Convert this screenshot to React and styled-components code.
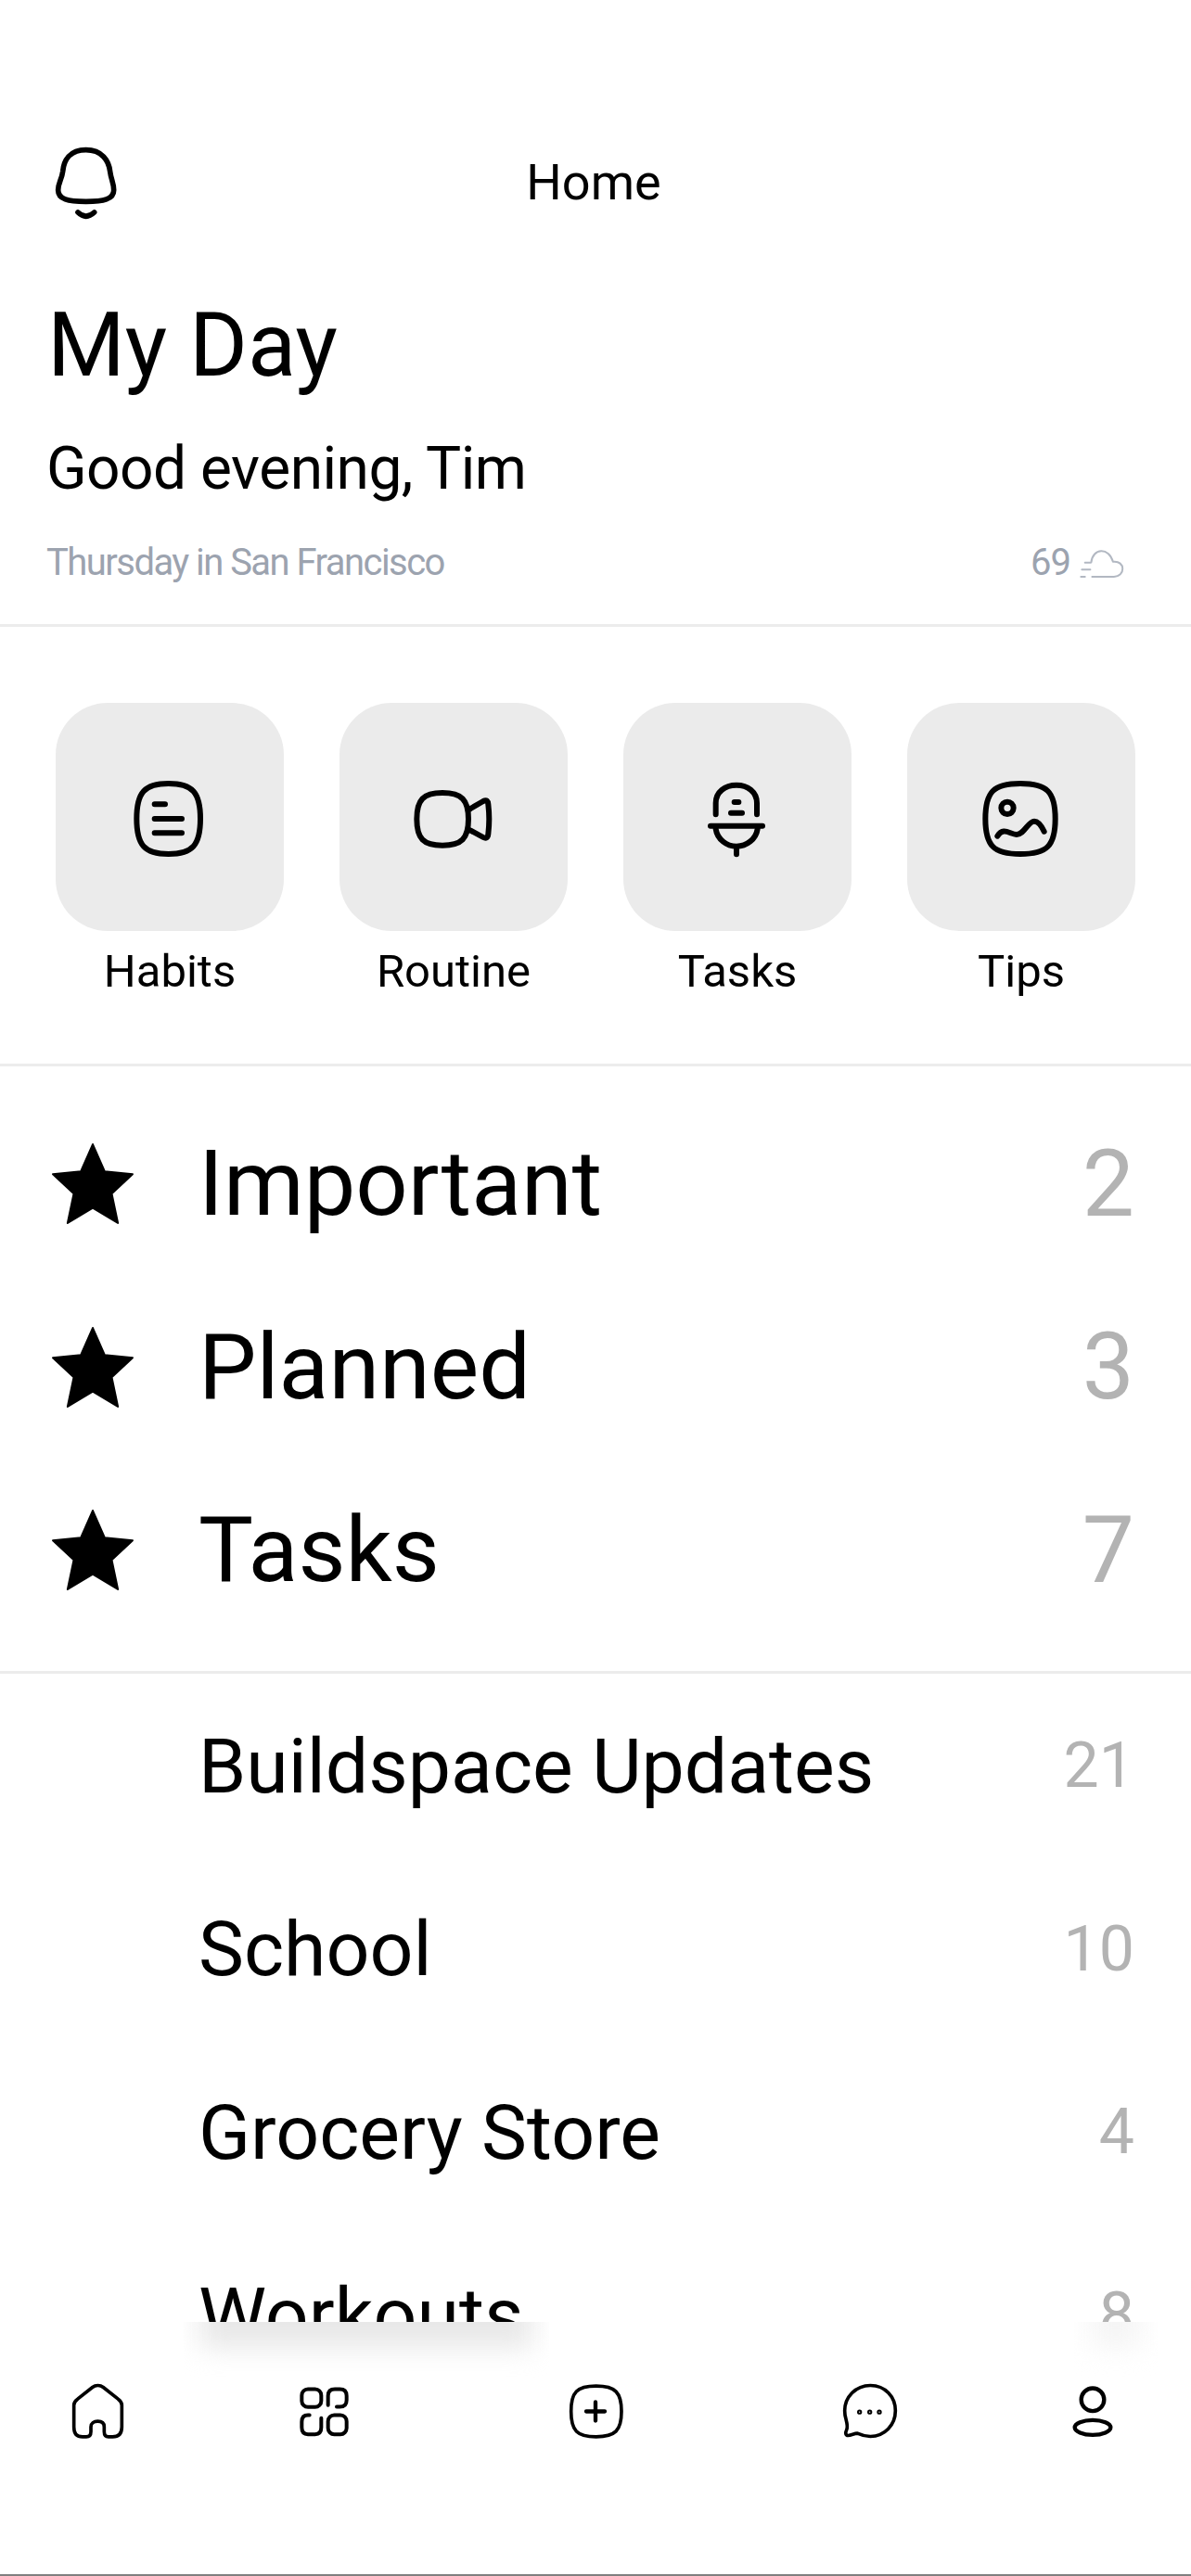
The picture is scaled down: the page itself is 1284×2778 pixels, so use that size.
import React from 'react';
import styled, { createGlobalStyle } from 'styled-components';

const GlobalStyle = createGlobalStyle`
  html, body { margin: 0; padding: 0; background: #fff; }
  body { font-family: Roboto, "Liberation Sans", sans-serif; color: #000; }
`;

const Page = styled.div`
  width: 1284px;
  height: 2778px;
  display: flex;
  flex-direction: column;
  overflow: hidden;
  background: #fff;
`;

const Content = styled.main`
  height: 2504px;
  flex: none;
  overflow: hidden;
`;

const TopBar = styled.header`
  display: grid;
  grid-template-columns: 1fr auto 1fr;
  align-items: center;
  padding: 140px 44px 0 40px;
  height: 120px;
`;

const TopTitle = styled.h1`
  margin: -6px 0 0;
  font-size: 54px;
  line-height: 74px;
  font-weight: 400;
`;

const Greeting = styled.section`
  padding: 54px 48px 0;
  height: 416px;
  box-sizing: border-box;
  border-bottom: 3px solid #ececec;
`;

const Heading = styled.h2`
  margin: 0 0 0 3px;
  font-size: 96px;
  line-height: 116px;
  font-weight: 400;
`;

const Hello = styled.p`
  margin: 0 0 0 2px;
  padding-top: 37px;
  font-size: 64px;
  line-height: 78px;
  letter-spacing: -0.5px;
`;

const MetaRow = styled.div`
  display: flex;
  align-items: center;
  justify-content: space-between;
  margin: 37px 0 0 2px;
  padding-right: 21px;
  color: #9ca3af;
  font-size: 40px;
  line-height: 50px;
  letter-spacing: -1.55px;
`;

const Weather = styled.span`
  display: flex;
  align-items: center;
  gap: 9px;
  letter-spacing: -1px;
`;

const Shortcuts = styled.section`
  display: grid;
  grid-template-columns: repeat(4, 246px);
  gap: 60px;
  padding: 82px 60px 0;
  height: 474px;
  box-sizing: border-box;
  border-bottom: 3px solid #ececec;
`;

const Shortcut = styled.div`
  display: flex;
  flex-direction: column;
  align-items: center;
  gap: 15px;
`;

const Tile = styled.div`
  width: 246px;
  height: 246px;
  border-radius: 56px;
  background: #ebebeb;
  display: flex;
  align-items: center;
  justify-content: center;
`;

const TileLabel = styled.span`
  font-size: 49px;
  line-height: 58px;
`;

const Featured = styled.section`
  padding: 28px 0 31px;
  border-bottom: 3px solid #ececec;
`;

const Lists = styled.section`
  padding-top: 2px;
`;

const Row = styled.div`
  display: flex;
  align-items: center;
  height: 197.5px;
  padding: 0 61px 0 55px;
`;

const StarSlot = styled.div`
  width: 159px;
  flex: none;
  display: flex;
  align-items: center;
  padding-top: 1px;
`;

const RowLabel = styled.span`
  flex: 1;
  font-size: ${p => (p.$big ? '99px' : '82.4px')};
  line-height: 1.2;
`;

const RowCount = styled.span`
  color: #b3b3b3;
  font-size: ${p => (p.$big ? '100px' : '68px')};
  line-height: 1.2;
`;

const TabBar = styled.nav`
  position: relative;
  flex: 1;
  display: grid;
  grid-template-columns: 210px 278px 308px 284px 196px;
  align-items: start;
  justify-items: center;
  padding-top: 63px;
  box-sizing: border-box;
  border-bottom: 2px solid #808080;
`;

const Shade = styled.div`
  position: absolute;
  top: 0;
  left: ${p => p.$left}px;
  width: ${p => p.$width}px;
  height: 60px;
  overflow: hidden;

  &::before {
    content: '';
    position: absolute;
    inset: -40px 18px 32px;
    background: ${p => p.$tone};
    filter: blur(14px);
  }
`;

const Line = styled.svg`
  display: block;
  fill: none;
  stroke: ${p => p.$color || '#000'};
  stroke-linecap: round;
  stroke-linejoin: round;
`;

const BellIcon = () => (
  <Line width="100" height="120" viewBox="0 0 300 360" strokeWidth="17">
    <path d="M158 65C210 65 232 100 236 135C239 160 248 172 248 195C248 225 215 232 158 232C100 232 68 225 68 195C68 172 80 160 83 135C86 100 105 65 158 65Z" />
    <path d="M132 267Q158 292 185 267" />
  </Line>
);

const CloudIcon = () => (
  <Line width="52" height="37" viewBox="225 40 155 110" strokeWidth="6" $color="#b2b8c2">
    <path d="M268 138H338C375 138 376 85 335 90C322 42 270 45 265 92" />
    <path d="M245 93H262M235 115H262M232 138H245" />
  </Line>
);

const HabitsIcon = () => (
  <Line width="100" height="100" viewBox="39 33 300 300" strokeWidth="18">
    <path d="M185 75C262 75 288 103 288 189C288 275 262 303 185 303C108 303 82 275 82 189C82 103 108 75 185 75Z" />
    <path d="M140 142H174M140 189H228M140 235H228" />
  </Line>
);

const VideoIcon = () => (
  <Line width="100" height="100" viewBox="957 33 300 300" strokeWidth="18">
    <path d="M1071 105C1133 105 1155 127 1155 190C1155 253 1133 275 1071 275C1009 275 988 253 988 190C988 127 1009 105 1071 105Z" />
    <path d="M1155 160L1203 132C1214 126 1218 132 1219 142C1223 175 1223 205 1219 238C1218 250 1212 254 1203 249L1155 223" />
  </Line>
);

const MicIcon = () => (
  <Line width="100" height="100" viewBox="75 33 300 300" strokeWidth="18">
    <path d="M155 175V138C155 102 185 80 222 80C258 80 288 102 288 138V175" />
    <path d="M215 135H229M204 170H240M138 212H306" />
    <path d="M155 222C160 255 190 278 222 278C255 278 285 255 290 222M222 278V304" />
  </Line>
);

const PictureIcon = () => (
  <Line width="100" height="100" viewBox="993 33 300 300" strokeWidth="18">
    <path d="M1140 75C1226 75 1253 101 1253 189C1253 277 1226 303 1140 303C1054 303 1027 277 1027 189C1027 101 1054 75 1140 75Z" />
    <circle cx="1098" cy="154" r="20" />
    <path d="M1066 245C1085 215 1105 238 1128 240C1153 240 1165 197 1185 197C1200 197 1210 215 1217 230" />
  </Line>
);

const StarIcon = () => (
  <svg width="90" height="90" viewBox="0 0 88 88">
    <path
      d="M44 2L56.5 30.5L86 33.5L64 54L70.5 85L44 69L17.5 85L24 54L2 33.5L31.5 30.5Z"
      fill="#000"
      stroke="#000"
      strokeWidth="2"
      strokeLinejoin="round"
    />
  </svg>
);

const HomeIcon = () => (
  <Line width="65" height="67" viewBox="40 50 195 200" strokeWidth="11">
    <path d="M60 130C60 120 65 115 72 110L120 72C130 64 145 64 155 72L203 110C210 115 215 120 215 130V200C215 222 205 232 185 232H172C162 232 158 225 158 215V200C158 188 150 182 137 182C125 182 115 188 115 200V215C115 225 110 232 100 232H88C68 232 60 222 60 200Z" />
  </Line>
);

const GridIcon = () => (
  <Line width="65" height="67" viewBox="770 50 195 200" strokeWidth="12">
    <rect x="795" y="78" width="63" height="58" rx="20" />
    <path d="M880 130V100Q880 78 902 78H918Q940 78 940 100V113Q940 135 918 135H908" />
    <path d="M820 162H815Q795 162 795 184V202Q795 224 815 224H838Q858 224 858 202V172" />
    <rect x="880" y="162" width="60" height="62" rx="20" />
  </Line>
);

const AddIcon = () => (
  <Line width="65" height="67" viewBox="60 50 195 200" strokeWidth="11">
    <path d="M158 68C220 68 240 88 240 150C240 212 220 232 158 232C96 232 77 212 77 150C77 88 96 68 158 68Z" />
    <path d="M126 150H186M156 120V180" strokeWidth="13" />
  </Line>
);

const ChatIcon = () => (
  <Line width="65" height="67" viewBox="950 50 195 200" strokeWidth="11">
    <path d="M1047 66C1095 66 1128 103 1128 148C1128 195 1092 231 1047 231C1030 231 1018 227 1005 221C995 221 985 228 975 228C967 228 965 220 970 210C975 200 972 190 968 175C965 165 964 155 964 148C964 103 1000 66 1047 66Z" />
    <circle cx="1012" cy="152" r="3" strokeWidth="10" />
    <circle cx="1045" cy="152" r="3" strokeWidth="10" />
    <circle cx="1076" cy="152" r="3" strokeWidth="10" />
  </Line>
);

const UserIcon = () => (
  <Line width="65" height="67" viewBox="140 260 195 200" strokeWidth="13">
    <circle cx="236" cy="322" r="37" />
    <ellipse cx="236" cy="412" rx="58" ry="24" />
  </Line>
);

const shortcuts = [
  { label: 'Habits', Icon: HabitsIcon },
  { label: 'Routine', Icon: VideoIcon },
  { label: 'Tasks', Icon: MicIcon },
  { label: 'Tips', Icon: PictureIcon }
];

const featured = [
  { label: 'Important', count: 2 },
  { label: 'Planned', count: 3 },
  { label: 'Tasks', count: 7 }
];

const lists = [
  { label: 'Buildspace Updates', count: 21 },
  { label: 'School', count: 10 },
  { label: 'Grocery Store', count: 4 },
  { label: 'Workouts', count: 8 }
];

const App = () => (
  <Page>
    <GlobalStyle />
    <Content>
      <TopBar>
        <BellIcon />
        <TopTitle>Home</TopTitle>
      </TopBar>
      <Greeting>
        <Heading>My Day</Heading>
        <Hello>Good evening, Tim</Hello>
        <MetaRow>
          <span>Thursday in San Francisco</span>
          <Weather>69 <CloudIcon /></Weather>
        </MetaRow>
      </Greeting>
      <Shortcuts>
        {shortcuts.map(({ label, Icon }) => (
          <Shortcut key={label}>
            <Tile><Icon /></Tile>
            <TileLabel>{label}</TileLabel>
          </Shortcut>
        ))}
      </Shortcuts>
      <Featured>
        {featured.map(({ label, count }) => (
          <Row key={label}>
            <StarSlot><StarIcon /></StarSlot>
            <RowLabel $big>{label}</RowLabel>
            <RowCount $big>{count}</RowCount>
          </Row>
        ))}
      </Featured>
      <Lists>
        {lists.map(({ label, count }) => (
          <Row key={label}>
            <StarSlot />
            <RowLabel>{label}</RowLabel>
            <RowCount>{count}</RowCount>
          </Row>
        ))}
      </Lists>
    </Content>
    <TabBar>
      <Shade $left={198} $width={394} $tone="#e8e8e8" />
      <Shade $left={1158} $width={90} $tone="#f5f5f5" />
      <HomeIcon />
      <GridIcon />
      <AddIcon />
      <ChatIcon />
      <UserIcon />
    </TabBar>
  </Page>
);

export default App;
